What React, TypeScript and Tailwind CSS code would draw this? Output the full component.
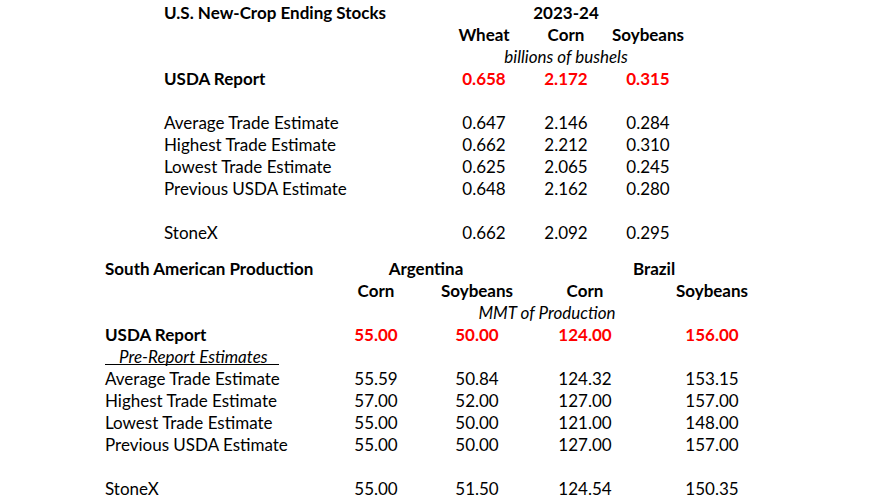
type Row = { label: string; values: string[] };

const usEstimates: Row[] = [
  { label: "Average Trade Estimate", values: ["0.647", "2.146", "0.284"] },
  { label: "Highest Trade Estimate", values: ["0.662", "2.212", "0.310"] },
  { label: "Lowest Trade Estimate", values: ["0.625", "2.065", "0.245"] },
  { label: "Previous USDA Estimate", values: ["0.648", "2.162", "0.280"] },
];

const saEstimates: Row[] = [
  { label: "Average Trade Estimate", values: ["55.59", "50.84", "124.32", "153.15"] },
  { label: "Highest Trade Estimate", values: ["57.00", "52.00", "127.00", "157.00"] },
  { label: "Lowest Trade Estimate", values: ["55.00", "50.00", "121.00", "148.00"] },
  { label: "Previous USDA Estimate", values: ["55.00", "50.00", "127.00", "157.00"] },
];

function Cells({ values, className = "" }: { values: string[]; className?: string }) {
  return (
    <>
      {values.map((v, i) => (
        <div key={i} className={`text-center ${className}`}>
          {v}
        </div>
      ))}
    </>
  );
}

function EndingStocks() {
  return (
    <section className="grid grid-cols-[279px_82px_82px_82px] auto-rows-[22px] items-center pl-[164px] pt-[2px]">
      <div className="font-bold">U.S. New-Crop Ending Stocks</div>
      <div />
      <div className="text-center font-bold">2023-24</div>
      <div />

      <div />
      <div className="text-center font-bold">Wheat</div>
      <div className="text-center font-bold">Corn</div>
      <div className="text-center font-bold">Soybeans</div>

      <div />
      <div className="col-span-3 text-center italic">billions of bushels</div>

      <div className="font-bold">USDA Report</div>
      <Cells values={["0.658", "2.172", "0.315"]} className="font-bold text-[#ff0000]" />

      <div className="col-span-4 h-[23px]" />

      {usEstimates.map((row) => (
        <div key={row.label} className="contents">
          <div>{row.label}</div>
          <Cells values={row.values} />
        </div>
      ))}

      <div className="col-span-4 h-[23px]" />

      <div>StoneX</div>
      <Cells values={["0.662", "2.092", "0.295"]} />
    </section>
  );
}

function SouthAmerica() {
  return (
    <section className="mt-[14px] grid grid-cols-[220px_102px_100px_116px_138px] auto-rows-[22px] items-center pl-[105px]">
      <div className="font-bold">South American Production</div>
      <div className="col-span-2 text-center font-bold">Argentina</div>
      <div className="col-span-2 text-center font-bold">Brazil</div>

      <div />
      <Cells values={["Corn", "Soybeans", "Corn", "Soybeans"]} className="font-bold" />

      <div />
      <div className="col-span-4 pr-[12px] text-center italic">MMT of Production</div>

      <div className="font-bold">USDA Report</div>
      <Cells values={["55.00", "50.00", "124.00", "156.00"]} className="font-bold text-[#ff0000]" />

      <div className="col-span-5 flex h-[23px] items-start">
        <div className="h-[19px] w-[174px] border-b border-black pl-[14px] italic">
          Pre-Report Estimates
        </div>
      </div>

      {saEstimates.map((row) => (
        <div key={row.label} className="contents">
          <div>{row.label}</div>
          <Cells values={row.values} />
        </div>
      ))}

      <div className="col-span-5" />

      <div>StoneX</div>
      <Cells values={["55.00", "51.50", "124.54", "150.35"]} />
    </section>
  );
}

export default function App() {
  return (
    <main className="h-[504px] w-[873px] overflow-hidden bg-white font-['Lato',sans-serif] text-[17px] leading-[22px] text-black">
      <EndingStocks />
      <SouthAmerica />
    </main>
  );
}
